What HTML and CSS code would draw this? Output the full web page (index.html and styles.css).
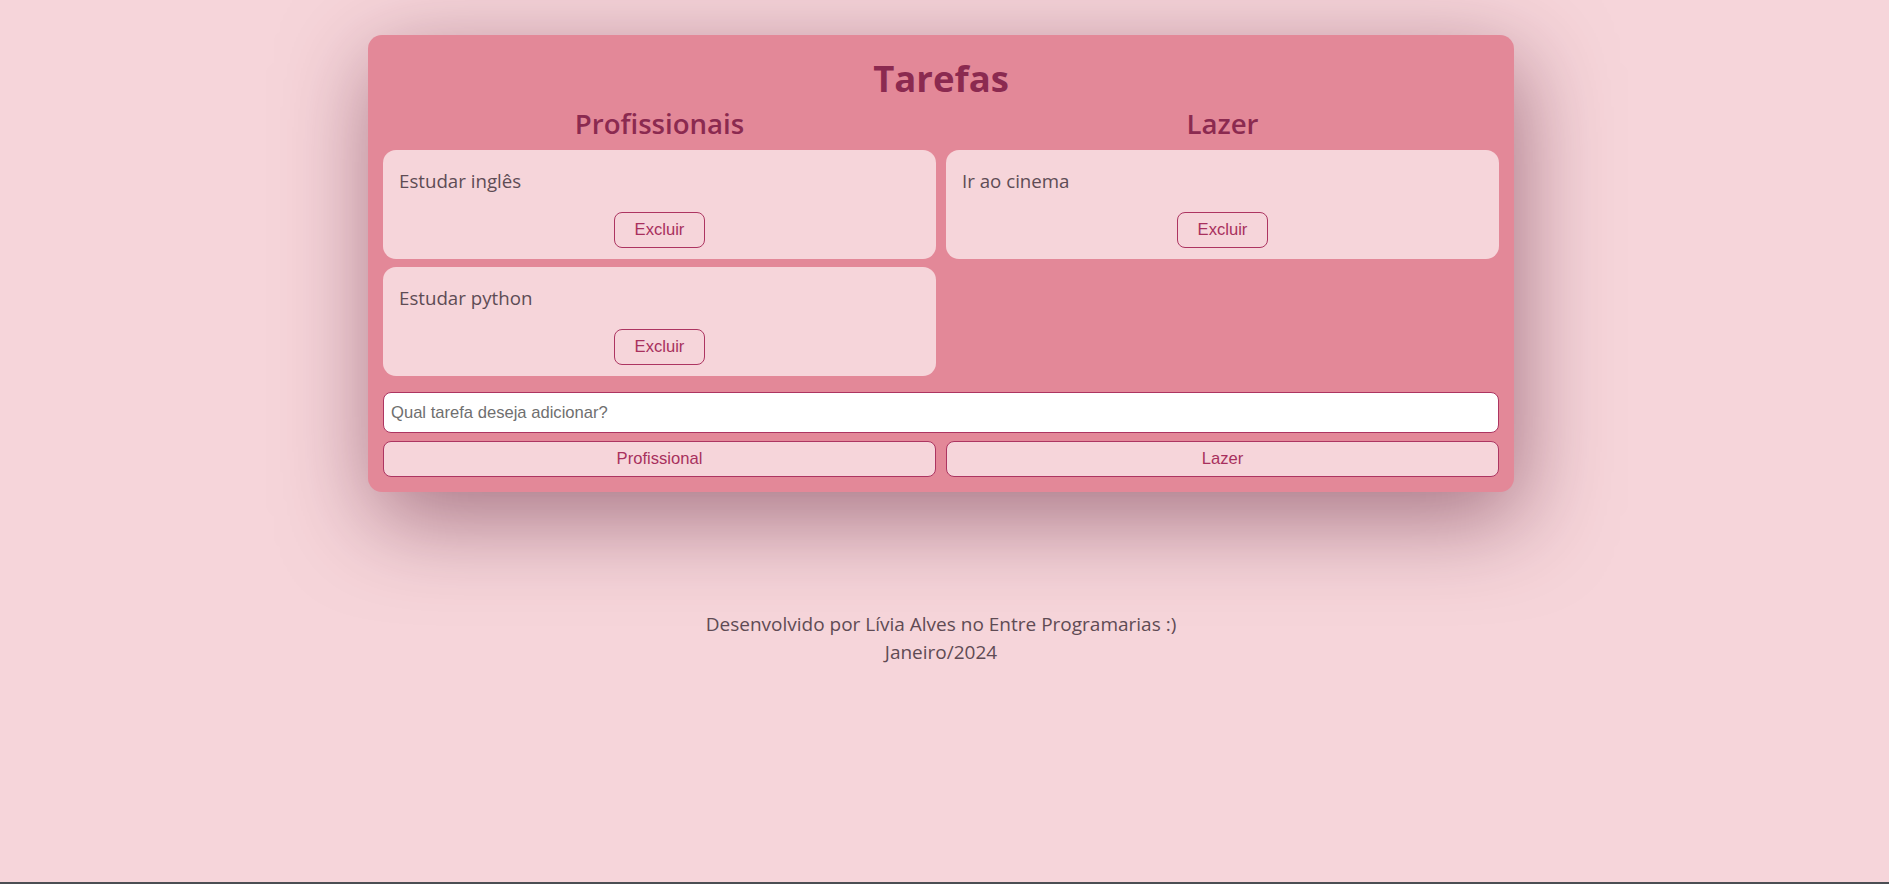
FILE: index.html
```html
<!DOCTYPE html>
<html lang="pt-BR">
<head>
<meta charset="utf-8">
<title>Tarefas</title>
<link rel="stylesheet" href="styles.css">
</head>
<body>
<div class="page">
  <main class="board">
    <h1 class="board-title">Tarefas</h1>
    <div class="columns">
      <section class="column">
        <h2 class="column-title">Profissionais</h2>
        <div class="task-list">
          <div class="task">
            <p class="task-text">Estudar inglês</p>
            <button class="btn-delete">Excluir</button>
          </div>
          <div class="task">
            <p class="task-text">Estudar python</p>
            <button class="btn-delete">Excluir</button>
          </div>
        </div>
      </section>
      <section class="column">
        <h2 class="column-title">Lazer</h2>
        <div class="task-list">
          <div class="task">
            <p class="task-text">Ir ao cinema</p>
            <button class="btn-delete">Excluir</button>
          </div>
        </div>
      </section>
    </div>
    <input class="task-input" type="text" placeholder="Qual tarefa deseja adicionar?">
    <div class="add-row">
      <button class="btn-add">Profissional</button>
      <button class="btn-add">Lazer</button>
    </div>
  </main>
  <footer class="credits">
    <p>Desenvolvido por Lívia Alves no Entre Programarias :)</p>
    <p>Janeiro/2024</p>
  </footer>
</div>
</body>
</html>
```
FILE: styles.css
```css
html {
  background: #4b4e53;
}
body {
  margin: 0;
  min-height: 882px;
  background: #f6d5da;
  font-family: "Open Sans", "Noto Sans", sans-serif;
}
.page {
  padding: 35px 7px 0 0;
}
.board {
  box-sizing: border-box;
  width: 1146px;
  margin: 0 auto;
  padding: 20px 15px 15px;
  background: #e38898;
  border-radius: 14px;
  box-shadow: 6px 26px 90px rgba(85, 20, 45, 0.5);
}
.board-title {
  margin: 0;
  text-align: center;
  font-size: 36.5px;
  line-height: 47px;
  font-weight: 700;
  color: #8b2a50;
}
.columns {
  display: grid;
  grid-template-columns: 1fr 1fr;
  column-gap: 10px;
  align-items: start;
}
.column-title {
  margin: 4px 0 9px;
  text-align: center;
  font-size: 27.6px;
  line-height: 35px;
  font-weight: 600;
  color: #8b2a50;
}
.task-list {
  display: flex;
  flex-direction: column;
  gap: 8px;
}
.task {
  display: flex;
  flex-direction: column;
  align-items: center;
  padding: 19px 16px 11px;
  background: #f6d5da;
  border-radius: 13px;
}
.task-text {
  align-self: stretch;
  margin: 0;
  font-size: 18.7px;
  line-height: 24px;
  color: #5e4c55;
}
.btn-delete {
  margin-top: 19px;
  box-sizing: border-box;
  height: 36px;
  padding: 0 20px;
  background: #f6d5da;
  border: 1px solid #ad3561;
  border-radius: 8px;
  font-family: "Liberation Sans", Arial, sans-serif;
  font-size: 16.6px;
  color: #a8305d;
}
.task-input {
  display: block;
  box-sizing: border-box;
  width: 100%;
  height: 41px;
  margin-top: 16px;
  padding: 0 7px;
  background: #ffffff;
  border: 1px solid #ad3561;
  border-radius: 8px;
  font-family: "Liberation Sans", Arial, sans-serif;
  font-size: 16.6px;
  color: #333;
}
.task-input::placeholder {
  color: #6f6f6f;
}
.add-row {
  display: grid;
  grid-template-columns: 1fr 1fr;
  column-gap: 10px;
  margin-top: 8px;
}
.btn-add {
  box-sizing: border-box;
  height: 36px;
  background: #f6d5da;
  border: 1px solid #ad3561;
  border-radius: 8px;
  font-family: "Liberation Sans", Arial, sans-serif;
  font-size: 16.6px;
  color: #a8305d;
}
.credits {
  margin-top: 119px;
  text-align: center;
  font-size: 19px;
  line-height: 27.6px;
  color: #5f4b54;
}
.credits p {
  margin: 0;
}
```
